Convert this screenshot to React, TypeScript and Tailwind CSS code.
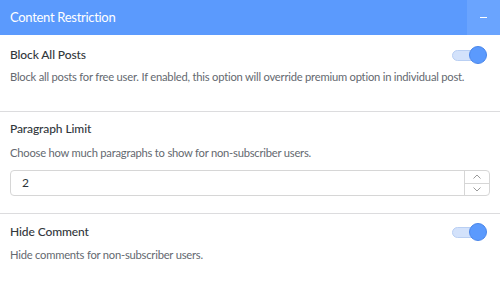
import React, { useState } from 'react';

interface ToggleProps {
  on: boolean;
  onChange: (v: boolean) => void;
}

const Toggle: React.FC<ToggleProps> = ({ on, onChange }) => (
  <button
    type="button"
    onClick={() => onChange(!on)}
    className="relative w-[36px] h-[18px] flex items-center shrink-0"
  >
    <span className="absolute left-[1px] w-[30px] h-[11px] rounded-full bg-[#d3e2fb] border border-[#b9cff3]" />
    <span
      className={`absolute w-[18px] h-[18px] rounded-full bg-[#5b9afd] border border-[#4a86ea] ${
        on ? 'left-[18px]' : 'left-0'
      }`}
    />
  </button>
);

const App: React.FC = () => {
  const [blockAll, setBlockAll] = useState(true);
  const [hideComment, setHideComment] = useState(true);
  const [limit, setLimit] = useState(2);

  return (
    <div className="w-[500px] h-[289px] bg-white overflow-hidden" style={{ fontFamily: 'Lato, "Noto Sans", sans-serif' }}>
      <div className="h-[35px] flex items-stretch bg-[#5b9afd]">
        <div className="flex-1 flex items-center pl-[10px] text-white text-[13px] tracking-[-0.3px]">Content Restriction</div>
        <button type="button" className="w-[33px] bg-[#6aa4fe] flex items-center justify-center">
          <span className="block w-[7px] h-[1.5px] bg-white" />
        </button>
      </div>

      <div className="px-[10px] pt-[10px] pb-[25px] border-b border-[#dcdcde]">
        <div className="flex items-center justify-between h-[20px] pr-[3px]">
          <span className="text-[12px] tracking-[-0.1px] font-medium text-[#32373c]">Block All Posts</span>
          <Toggle on={blockAll} onChange={setBlockAll} />
        </div>
        <p className="mt-[3px] text-[11.2px] tracking-[-0.22px] leading-[18px] text-[#646970] whitespace-nowrap">
          Block all posts for free user. If enabled, this option will override premium option in individual post.
        </p>
      </div>

      <div className="px-[10px] pt-[7px] pb-[17px] border-b border-[#dcdcde]">
        <div className="h-[20px] flex items-center text-[12px] tracking-[-0.1px] font-medium text-[#32373c]">Paragraph Limit</div>
        <p className="mt-[5px] text-[11.2px] tracking-[-0.22px] leading-[18px] text-[#646970]">
          Choose how much paragraphs to show for non-subscriber users.
        </p>
        <div className="mt-[8px] h-[26px] flex border border-[#d6d6d6] rounded-[4px] overflow-hidden">
          <input
            value={limit}
            onChange={(e) => setLimit(Number(e.target.value) || 0)}
            className="flex-1 px-[11px] text-[12px] text-[#2c3338] outline-none"
          />
          <div className="w-[25px] flex flex-col border-l border-[#d6d6d6]">
            <button
              type="button"
              onClick={() => setLimit(limit + 1)}
              className="flex-1 flex items-center justify-center border-b border-[#d6d6d6]"
            >
              <svg width="8" height="5" viewBox="0 0 8 5" fill="none">
                <path d="M0.5 4.5L4 1L7.5 4.5" stroke="#9a9a9a" strokeWidth="1" />
              </svg>
            </button>
            <button
              type="button"
              onClick={() => setLimit(Math.max(0, limit - 1))}
              className="flex-1 flex items-center justify-center"
            >
              <svg width="8" height="5" viewBox="0 0 8 5" fill="none">
                <path d="M0.5 0.5L4 4L7.5 0.5" stroke="#9a9a9a" strokeWidth="1" />
              </svg>
            </button>
          </div>
        </div>
      </div>

      <div className="px-[10px] pt-[8px]">
        <div className="flex items-center justify-between h-[20px] pr-[3px]">
          <span className="text-[12px] tracking-[-0.1px] font-medium text-[#32373c]">Hide Comment</span>
          <Toggle on={hideComment} onChange={setHideComment} />
        </div>
        <p className="mt-[4px] text-[11.2px] tracking-[-0.22px] leading-[18px] text-[#646970]">
          Hide comments for non-subscriber users.
        </p>
      </div>
    </div>
  );
};

export default App;
